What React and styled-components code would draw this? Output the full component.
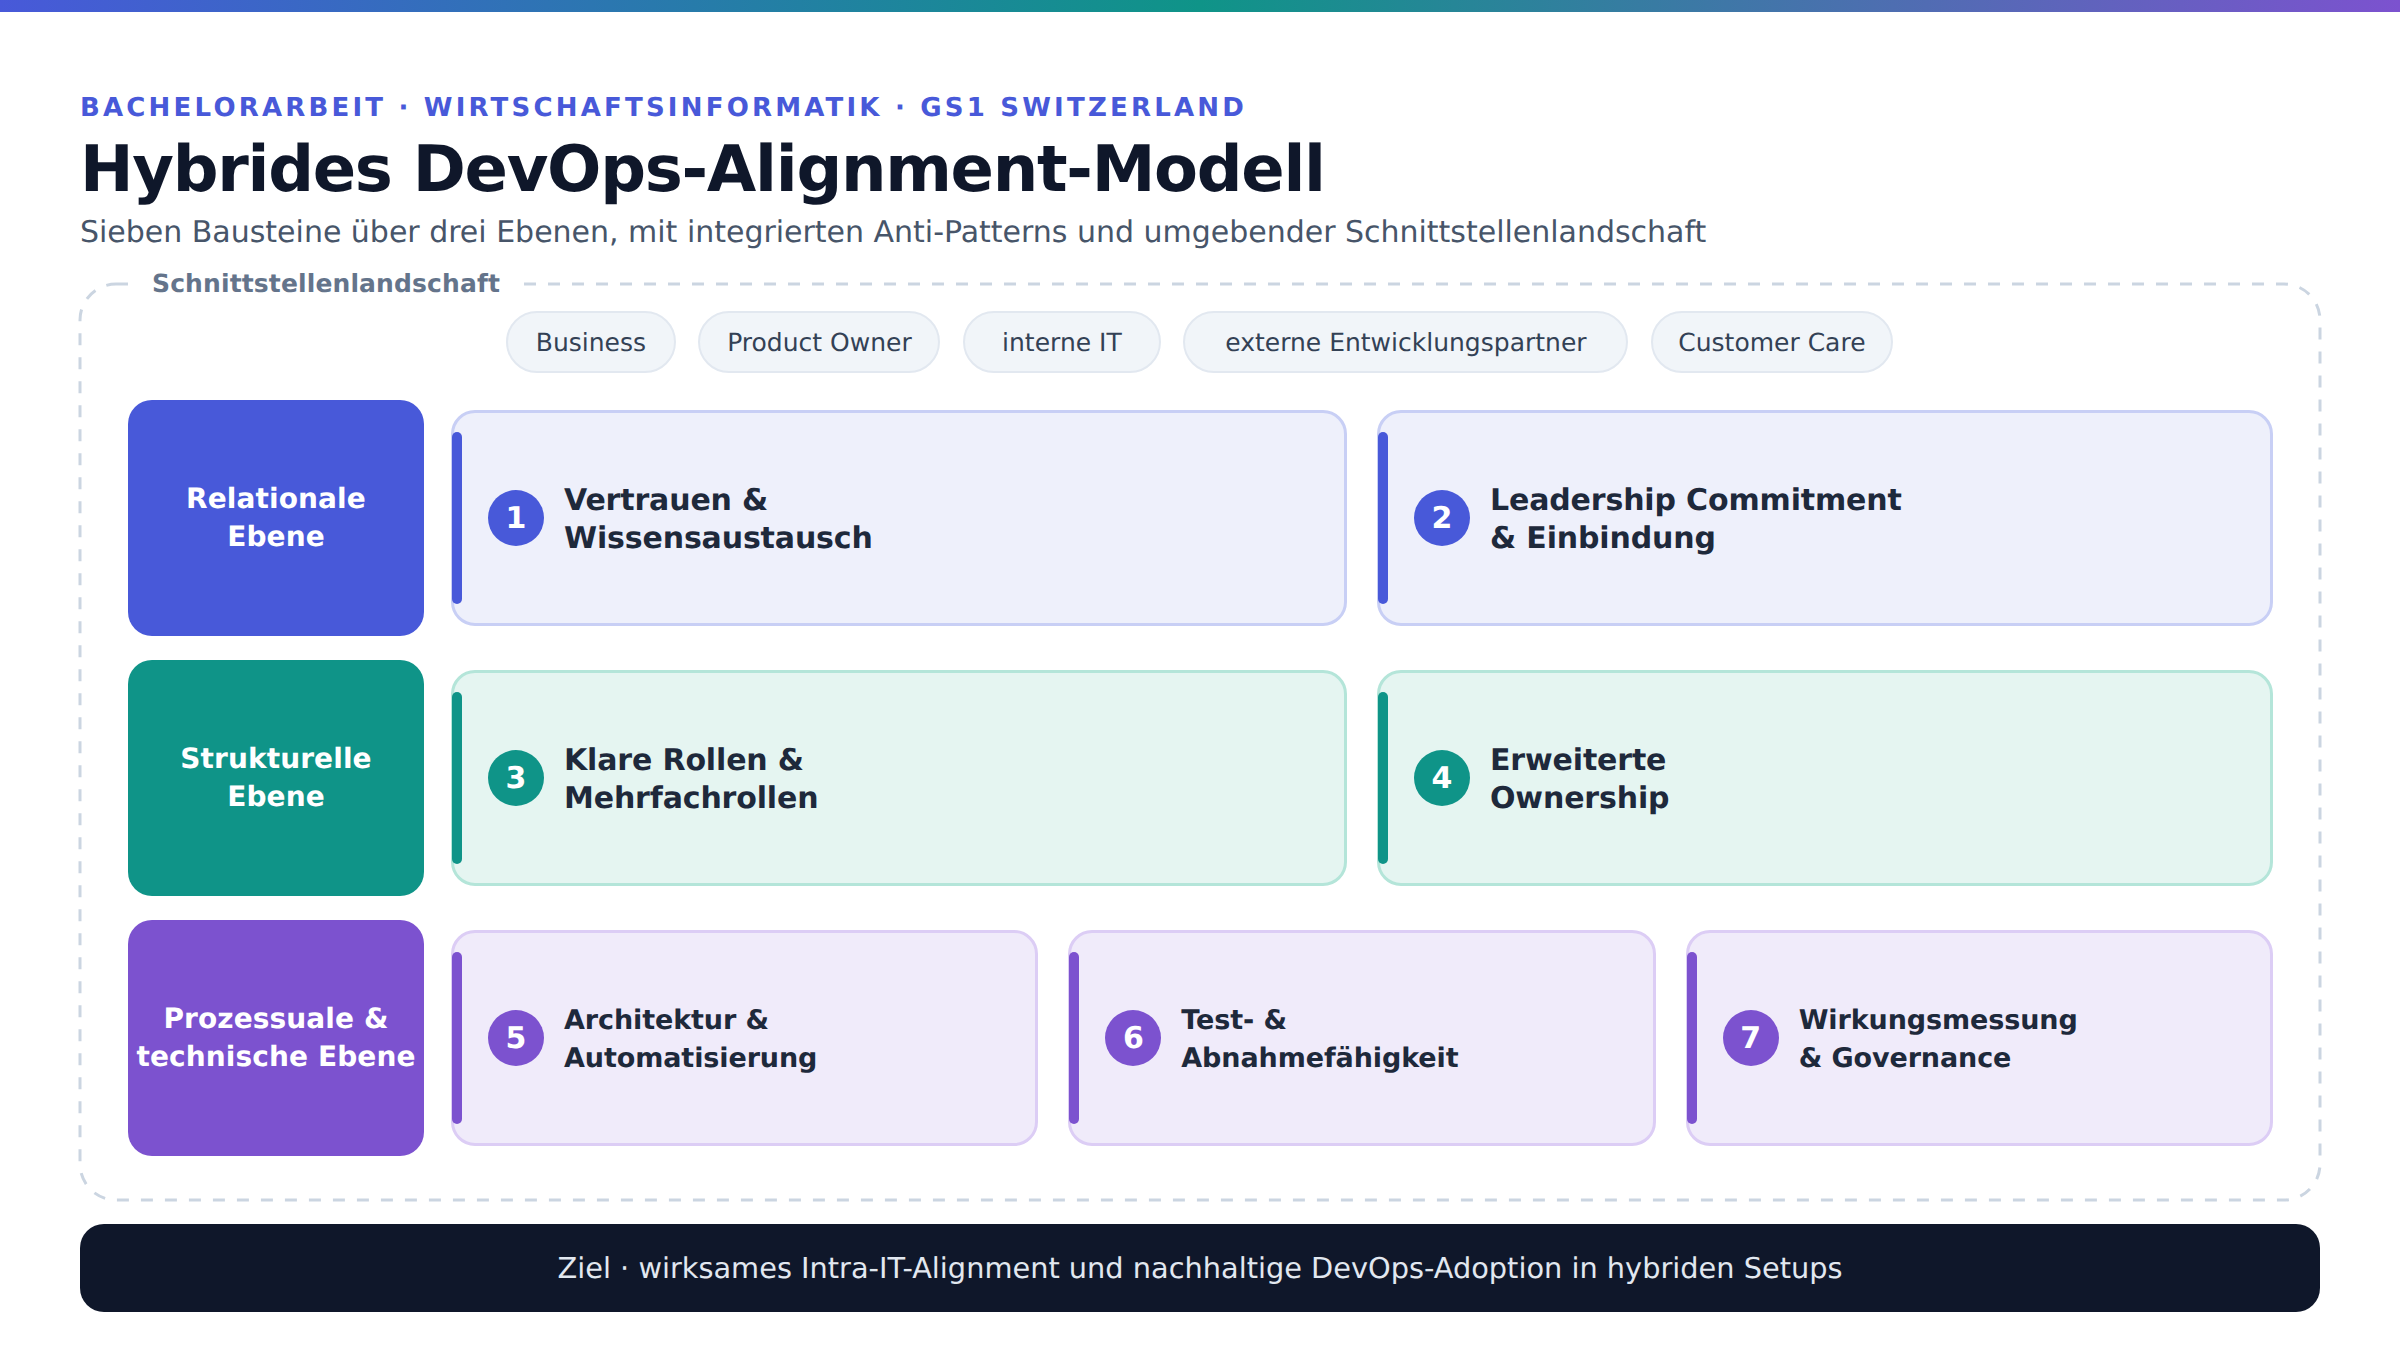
import React from 'react'
import styled, { createGlobalStyle } from 'styled-components'

const GlobalStyle = createGlobalStyle`
  html, body {
    margin: 0;
    padding: 0;
    background: #ffffff;
  }
  body {
    font-family: "DejaVu Sans", sans-serif;
    text-rendering: geometricPrecision;
  }
  * {
    box-sizing: border-box;
  }
`

const tones = {
  blue: { main: '#4859d9', soft: '#eef0fb', line: '#c8cff5' },
  teal: { main: '#0f9488', soft: '#e5f5f1', line: '#b4e5d9' },
  purple: { main: '#7c52cf', soft: '#f0ebfa', line: '#dccdf5' },
}

const Page = styled.div`
  width: 2400px;
  height: 1350px;
  overflow: hidden;
  display: flex;
  flex-direction: column;
`

const TopBar = styled.div`
  height: 12px;
  background: linear-gradient(90deg, #4859d9 0%, #0f9488 50%, #7c52cf 100%);
`

const Content = styled.div`
  padding: 79px 80px 0;
  display: flex;
  flex-direction: column;
`

const Eyebrow = styled.div`
  font-size: 26px;
  line-height: 34px;
  font-weight: 700;
  letter-spacing: 3.2px;
  color: #4859d9;
`

const Title = styled.h1`
  margin: 7px 0 0;
  font-size: 64px;
  line-height: 76px;
  font-weight: 700;
  letter-spacing: -1.28px;
  color: #0f172a;
`

const Subtitle = styled.div`
  margin-top: 5px;
  font-size: 30px;
  line-height: 40px;
  letter-spacing: -0.012px;
  color: #475569;
`

const Frame = styled.section`
  position: relative;
  margin-top: 31px;
  height: 916px;
  padding: 27px 47px 0 48px;
  display: flex;
  flex-direction: column;
`

const FrameLine = styled.svg`
  position: absolute;
  left: 0;
  top: 0;
  overflow: visible;
  pointer-events: none;
`

const Legend = styled.div`
  position: absolute;
  left: 50px;
  top: -16px;
  padding: 0 22px;
  background: #ffffff;
  font-size: 25px;
  line-height: 32px;
  font-weight: 700;
  letter-spacing: 0.13px;
  color: #64748b;
`

const Chips = styled.div`
  position: relative;
  display: flex;
  justify-content: center;
  gap: 22.5px;
  margin: 0 0 27px -2.2px;
`

const Chip = styled.div`
  width: ${(p) => p.$width}px;
  height: 62px;
  display: flex;
  align-items: center;
  justify-content: center;
  border: 2px solid #e2e8f0;
  border-radius: 31px;
  background: #f1f5f9;
  font-size: 25px;
  color: #334155;
`

const Rows = styled.div`
  position: relative;
  display: flex;
  flex-direction: column;
  gap: 24px;
`

const Row = styled.div`
  display: grid;
  grid-template-columns: 296px 1fr;
  column-gap: 27px;
  height: 236px;
`

const Level = styled.div`
  display: flex;
  align-items: center;
  justify-content: center;
  border-radius: 24px;
  background: ${(p) => tones[p.$tone].main};
  font-size: 28px;
  line-height: 38px;
  font-weight: 700;
  letter-spacing: 0.1px;
  text-align: center;
  white-space: nowrap;
  color: #ffffff;
`

const Cards = styled.div`
  display: grid;
  grid-template-columns: repeat(${(p) => p.$count}, 1fr);
  column-gap: 30px;
  padding: 10px 0;
`

const Card = styled.div`
  position: relative;
  display: flex;
  align-items: center;
  gap: 20px;
  padding-left: 34px;
  border: 3px solid ${(p) => tones[p.$tone].line};
  border-radius: 24px;
  background: ${(p) => tones[p.$tone].soft};
`

const Accent = styled.span`
  position: absolute;
  left: -2px;
  top: 19px;
  bottom: 19px;
  width: 10px;
  border-radius: 5px;
  background: ${(p) => tones[p.$tone].main};
`

const Num = styled.div`
  flex: none;
  width: 56px;
  height: 56px;
  display: flex;
  align-items: center;
  justify-content: center;
  border-radius: 50%;
  background: ${(p) => tones[p.$tone].main};
  font-size: 30px;
  font-weight: 700;
  color: #ffffff;
`

const CardText = styled.div`
  padding-top: 3px;
  font-size: ${(p) => (p.$small ? 27 : 30)}px;
  line-height: 38px;
  font-weight: 700;
  letter-spacing: ${(p) => (p.$small ? -0.1 : -0.15)}px;
  color: #1e293b;
`

const Goal = styled.div`
  height: 88px;
  margin-top: 24px;
  display: flex;
  align-items: center;
  justify-content: center;
  border-radius: 24px;
  background: #0f172a;
  font-size: 28.8px;
  color: #e2e8f0;
`

const chips = [
  { text: 'Business', width: 170 },
  { text: 'Product Owner', width: 242 },
  { text: 'interne IT', width: 198 },
  { text: 'externe Entwicklungspartner', width: 445 },
  { text: 'Customer Care', width: 242 },
]

const levels = [
  {
    tone: 'blue',
    name: ['Relationale', 'Ebene'],
    cards: [
      { n: 1, lines: ['Vertrauen &', 'Wissensaustausch'] },
      { n: 2, lines: ['Leadership Commitment', '& Einbindung'] },
    ],
  },
  {
    tone: 'teal',
    name: ['Strukturelle', 'Ebene'],
    cards: [
      { n: 3, lines: ['Klare Rollen &', 'Mehrfachrollen'] },
      { n: 4, lines: ['Erweiterte', 'Ownership'] },
    ],
  },
  {
    tone: 'purple',
    name: ['Prozessuale &', 'technische Ebene'],
    cards: [
      { n: 5, lines: ['Architektur &', 'Automatisierung'] },
      { n: 6, lines: ['Test- &', 'Abnahmefähigkeit'] },
      { n: 7, lines: ['Wirkungsmessung', '& Governance'] },
    ],
  },
]

const App = () => {
  return (
    <>
      <GlobalStyle />
      <Page>
        <TopBar />
        <Content>
          <Eyebrow>BACHELORARBEIT · WIRTSCHAFTSINFORMATIK · GS1 SWITZERLAND</Eyebrow>
          <Title>Hybrides DevOps-Alignment-Modell</Title>
          <Subtitle>Sieben Bausteine über drei Ebenen, mit integrierten Anti-Patterns und umgebender Schnittstellenlandschaft</Subtitle>

          <Frame>
            <FrameLine width="2240" height="916">
              <rect x="0" y="0" width="2240" height="916" rx="36" fill="none" stroke="#cbd5e1" strokeWidth="3" strokeDasharray="12 12" />
            </FrameLine>
            <Legend>Schnittstellenlandschaft</Legend>

            <Chips>
              {chips.map((c) => (
                <Chip key={c.text} $width={c.width}>{c.text}</Chip>
              ))}
            </Chips>

            <Rows>
              {levels.map((level) => (
                <Row key={level.tone}>
                  <Level $tone={level.tone}>
                    <div>{level.name[0]}<br />{level.name[1]}</div>
                  </Level>
                  <Cards $count={level.cards.length}>
                    {level.cards.map((card) => (
                      <Card key={card.n} $tone={level.tone}>
                        <Accent $tone={level.tone} />
                        <Num $tone={level.tone}>{card.n}</Num>
                        <CardText $small={level.cards.length === 3}>
                          {card.lines[0]}<br />{card.lines[1]}
                        </CardText>
                      </Card>
                    ))}
                  </Cards>
                </Row>
              ))}
            </Rows>
          </Frame>

          <Goal>Ziel · wirksames Intra-IT-Alignment und nachhaltige DevOps-Adoption in hybriden Setups</Goal>
        </Content>
      </Page>
    </>
  )
}

export default App
